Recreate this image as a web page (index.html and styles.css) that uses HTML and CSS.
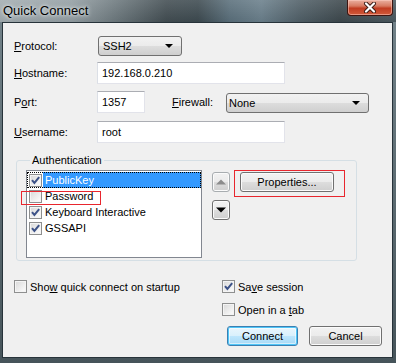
FILE: index.html
```html
<!DOCTYPE html>
<html lang="en">

<head>
  <meta charset="UTF-8">
  <meta name="viewport" content="width=device-width, initial-scale=1.0">
  <title>Quick Connect</title>
  <link rel="stylesheet" href="styles.css">
</head>

<body>
  <div class="window">
    <div class="titlebar">
      <div class="title">Quick Connect</div>
      <div class="close">
        <svg width="14" height="11" viewBox="0 0 14 11">
          <path d="M3 1.5 L11 9.5 M11 1.5 L3 9.5" stroke="#3a1a14" stroke-width="4" stroke-linecap="round" />
          <path d="M3 1.5 L11 9.5 M11 1.5 L3 9.5" stroke="#fff" stroke-width="2.2" stroke-linecap="round" />
        </svg>
      </div>
    </div>

    <div class="client">
      <!-- 上面四排 -->
      <div class="row row_protocol">
        <div class="lbl"><u>P</u>rotocol:</div>
        <div class="combo combo_protocol"><span>SSH2</span><i class="arrow"></i></div>
      </div>
      <div class="row row_host">
        <div class="lbl"><u>H</u>ostname:</div>
        <div class="edit edit_wide">192.168.0.210</div>
      </div>
      <div class="row row_port">
        <div class="lbl">P<u>o</u>rt:</div>
        <div class="edit edit_port">1357</div>
        <div class="lbl lbl_fw"><u>F</u>irewall:</div>
        <div class="combo combo_fw"><span>None</span><i class="arrow"></i></div>
      </div>
      <div class="row row_user">
        <div class="lbl"><u>U</u>sername:</div>
        <div class="edit edit_wide">root</div>
      </div>

      <!-- Authentication -->
      <fieldset class="group">
        <legend>Authentication</legend>
        <div class="group_body">
          <div class="list">
            <div class="item item_sel">
              <span class="cb on"><svg viewBox="0 0 11 11"><path d="M2 5.2 L4.4 8 L9.2 2.2" /></svg></span>
              <span class="item_txt">PublicKey</span>
            </div>
            <div class="item">
              <span class="cb"></span>
              <span class="item_txt">Password</span>
              <span class="mark mark_pw"></span>
            </div>
            <div class="item">
              <span class="cb on"><svg viewBox="0 0 11 11"><path d="M2 5.2 L4.4 8 L9.2 2.2" /></svg></span>
              <span class="item_txt">Keyboard Interactive</span>
            </div>
            <div class="item">
              <span class="cb on"><svg viewBox="0 0 11 11"><path d="M2 5.2 L4.4 8 L9.2 2.2" /></svg></span>
              <span class="item_txt">GSSAPI</span>
            </div>
          </div>
          <div class="moves">
            <div class="btn btn_small btn_up">
              <svg width="10" height="6" viewBox="0 0 10 6"><polygon points="0,5.5 10,5.5 5,0.5" fill="#8c8c8c" /></svg>
            </div>
            <div class="btn btn_small btn_down">
              <svg width="10" height="6" viewBox="0 0 10 6"><polygon points="0,0.5 10,0.5 5,5.5" fill="#000" /></svg>
            </div>
          </div>
          <div class="btn btn_props">
            Properties...
            <span class="mark mark_props"></span>
          </div>
        </div>
      </fieldset>

      <!-- 下面 -->
      <div class="bottom">
        <div class="bottom_left">
          <div class="check">
            <span class="cb"></span>
            <span>Sho<u>w</u> quick connect on startup</span>
          </div>
        </div>
        <div class="bottom_right">
          <div class="check">
            <span class="cb on"><svg viewBox="0 0 11 11"><path d="M2 5.2 L4.4 8 L9.2 2.2" /></svg></span>
            <span>Sa<u>v</u>e session</span>
          </div>
          <div class="check check_tab">
            <span class="cb"></span>
            <span>Open in a <u>t</u>ab</span>
          </div>
          <div class="buttons">
            <div class="btn btn_default">Connect</div>
            <div class="btn btn_cancel">Cancel</div>
          </div>
        </div>
      </div>
    </div>
  </div>
</body>

</html>
```

FILE: styles.css
```css
body {
  margin: 0;
  font-family: "Liberation Sans", Arial, sans-serif;
  font-size: 11px;
  color: #000;
}

/* 視窗 */
.window {
  width: 396px;
  height: 363px;
  background: linear-gradient(#74848b, #46545a);
  display: flex;
  flex-direction: column;
  overflow: hidden;
}

.titlebar {
  height: 22px;
  display: flex;
  align-items: flex-start;
  background:
    linear-gradient(rgba(255, 255, 255, 0.12), rgba(0, 0, 0, 0.05)),
    linear-gradient(90deg, #a3adb1 0%, #939ea3 18%, #6a767b 30%, #424d52 42%, #3d4a50 50%, #5a6f7b 58%, #6a7f8b 66%, #4f5e66 76%, #3d484d 86%, #4b5960 100%);
}

.title {
  font-size: 13px;
  line-height: 18px;
  padding: 2px 0 0 3px;
  text-shadow: 0 0 5px #e4eaec, 0 0 3px #e4eaec;
}

.close {
  margin-left: auto;
  margin-right: 3px;
  width: 44px;
  height: 15px;
  border: 1px solid #3e1510;
  border-top: none;
  border-radius: 0 0 4px 4px;
  background: linear-gradient(#eab0a0, #d77a62 40%, #c13c22 55%, #cf5a3a 100%);
  box-shadow: inset 0 0 0 1px rgba(255, 210, 200, 0.5);
  display: flex;
  align-items: center;
  justify-content: center;
}

.client {
  margin: 0 3px 0 2px;
  height: 334px;
  border: 1px solid #27333a;
  background: #f0f0f0;
  padding: 0 10px 0 11px;
  display: flex;
  flex-direction: column;
}

/* 表單 */
.row {
  display: flex;
  align-items: center;
}

.row_protocol {
  margin-top: 13px;
  height: 20px;
}

.row_host {
  margin-top: 6px;
  height: 22px;
}

.row_port {
  margin-top: 7px;
  height: 22px;
}

.row_user {
  margin-top: 8px;
  height: 22px;
}

.lbl {
  width: 83px;
  flex: none;
}

.lbl_fw {
  width: 54px;
  margin-left: 27px;
}

.edit {
  height: 22px;
  box-sizing: border-box;
  background: #fff;
  border: 1px solid #e2e3ea;
  border-top-color: #abadb3;
  border-left-color: #dbdfe6;
  padding: 3px 4px 0;
  line-height: 15px;
}

.edit_wide {
  width: 188px;
}

.edit_port {
  width: 48px;
}

.combo {
  height: 20px;
  box-sizing: border-box;
  border: 1px solid #707070;
  border-radius: 3px;
  background: linear-gradient(#f2f2f2, #ebebeb 50%, #dddddd 50%, #cfcfcf);
  display: flex;
  align-items: center;
  padding: 0 8px 0 4px;
}

.combo span {
  flex: 1;
}

.combo_protocol {
  width: 84px;
  margin-left: 1px;
}

.combo_fw {
  width: 143px;
  align-self: flex-end;
  padding-left: 2px;
}

.arrow {
  width: 0;
  height: 0;
  border-left: 4px solid transparent;
  border-right: 4px solid transparent;
  border-top: 4px solid #000;
}

/* Authentication 框 */
.group {
  margin: 11px 0 0 2px;
  width: 341px;
  box-sizing: border-box;
  border: 1px solid #d5dfe5;
  border-radius: 3px;
  padding: 3px 0 2px 9px;
}

.group legend {
  margin-left: 4px;
  padding: 0 2px;
  line-height: 13px;
}

.group_body {
  display: flex;
  align-items: flex-start;
}

.list {
  width: 176px;
  height: 88px;
  box-sizing: border-box;
  border: 1px solid #828790;
  background: #fff;
  padding-top: 1px;
}

.item {
  height: 16px;
  display: flex;
  align-items: center;
  padding-left: 2px;
  position: relative;
}

.item .cb {
  flex: none;
}

.item_txt {
  flex: 1;
  height: 16px;
  line-height: 16px;
  padding-left: 2px;
  margin-left: 1px;
}

.item_sel {
  outline: 1px dotted #000;
  outline-offset: -1px;
}

.item_sel .item_txt {
  background: #3399ff;
  color: #fff;
}

/* 紅框 */
.mark {
  position: absolute;
  border: 1px solid #e8262e;
}

.mark_pw {
  left: -6px;
  top: 3px;
  width: 78px;
  height: 12px;
}

.mark_props {
  left: -7px;
  top: -3px;
  width: 109px;
  height: 25px;
}

/* 核取方塊 */
.cb {
  width: 13px;
  height: 13px;
  box-sizing: border-box;
  border: 1px solid #8e8f8f;
  background: linear-gradient(135deg, #d8d8d8, #f7f7f7 80%);
  box-shadow: inset 0 0 0 1px #f4f4f4;
  display: inline-flex;
  align-items: center;
  justify-content: center;
}

.cb svg {
  width: 11px;
  height: 11px;
}

.cb svg path {
  fill: none;
  stroke: #3d5287;
  stroke-width: 2;
}

/* 按鈕 */
.btn {
  height: 20px;
  box-sizing: border-box;
  border: 1px solid #707070;
  border-radius: 3px;
  background: linear-gradient(#f2f2f2, #ebebeb 50%, #dddddd 50%, #cfcfcf);
  box-shadow: inset 0 0 0 1px #fbfbfb;
  display: flex;
  align-items: center;
  justify-content: center;
  position: relative;
}

.moves {
  margin-left: 10px;
  display: flex;
  flex-direction: column;
}

.btn_small {
  width: 18px;
}

.btn_up {
  margin-top: 2px;
  border-color: #a8adb0;
}

.btn_down {
  margin-top: 8px;
}

.btn_props {
  width: 94px;
  margin: 2px 0 0 10px;
}

/* 下方 */
.bottom {
  display: flex;
  margin-top: 19px;
}

.bottom_left {
  width: 208px;
}

.check {
  display: flex;
  align-items: center;
  height: 13px;
}

.check .cb {
  margin-right: 3px;
}

.check_tab {
  margin-top: 10px;
}

.buttons {
  display: flex;
  margin: 10px 0 0 5px;
}

.btn_default {
  width: 71px;
  border-color: #3c7fb1;
  background: linear-gradient(#eaf6fd, #d9f0fc 50%, #bee6fd 50%, #a7d9f5);
  box-shadow: inset 0 0 0 1px #4fc6f8, inset 0 0 0 2px rgba(255, 255, 255, 0.5);
}

.btn_cancel {
  width: 73px;
  margin-left: 11px;
}
```
